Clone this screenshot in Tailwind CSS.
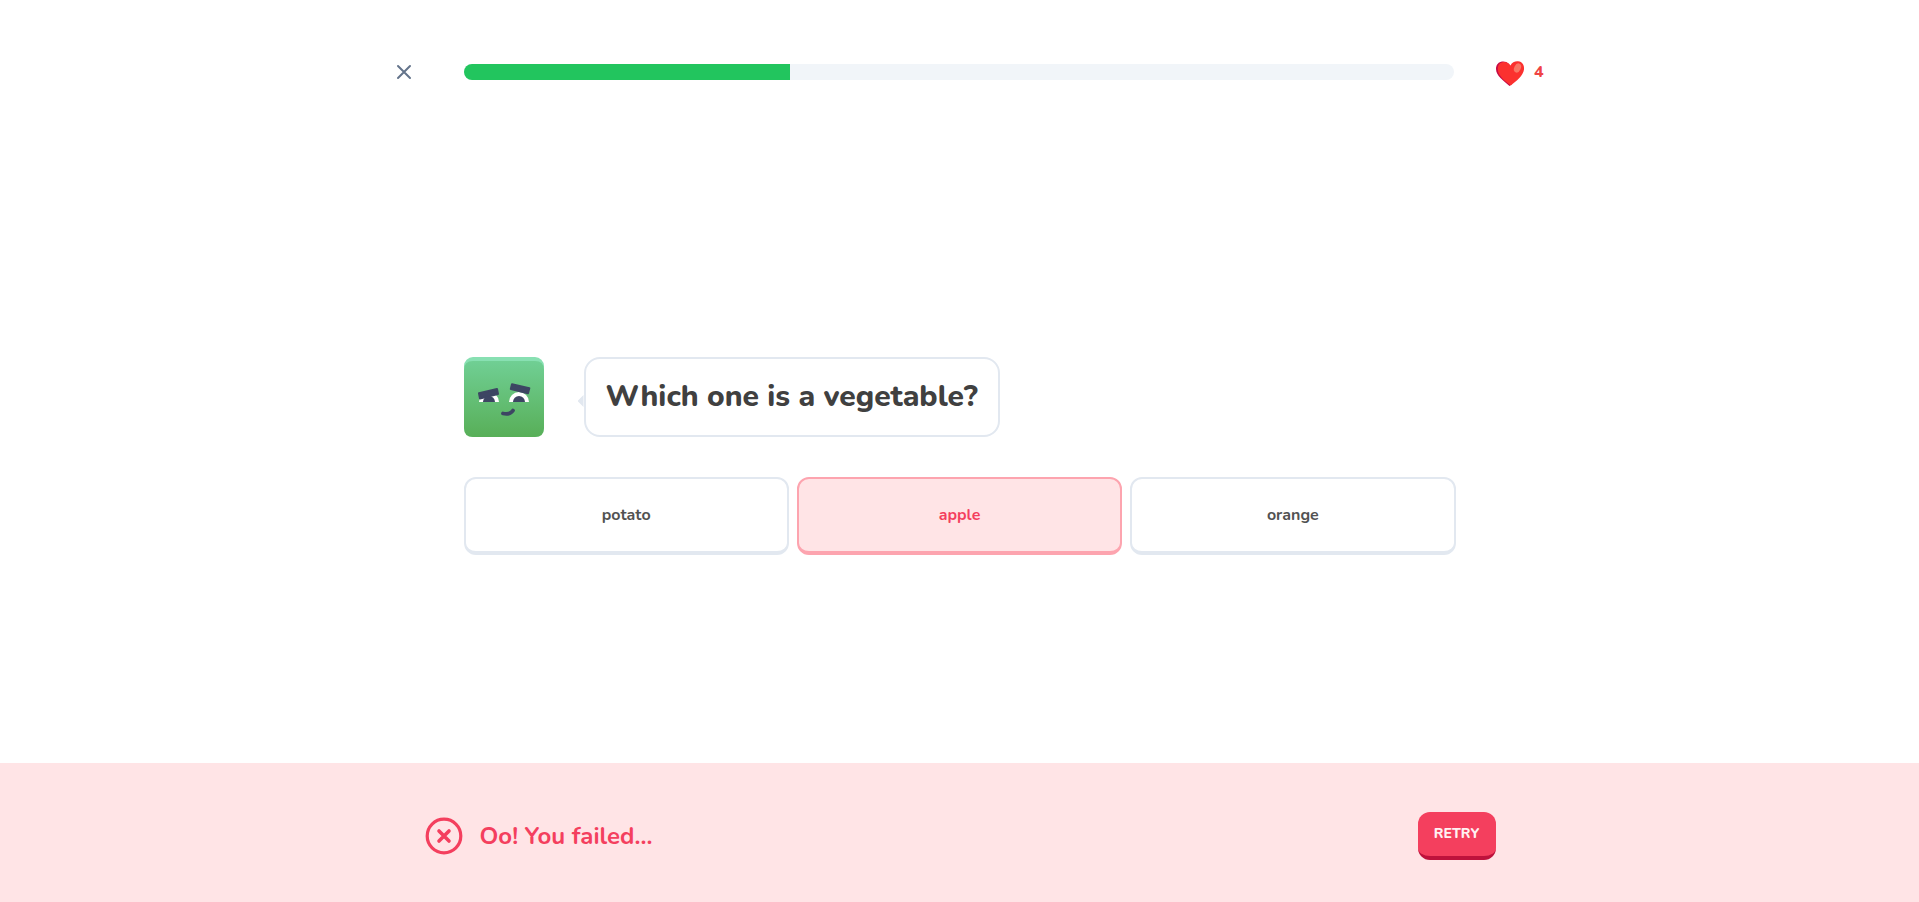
<!DOCTYPE html>
<html lang="en">
<head>
<meta charset="utf-8">
<meta name="viewport" content="width=device-width, initial-scale=1">
<title>Lesson</title>
<script src="https://cdn.jsdelivr.net/npm/@tailwindcss/browser@4"></script>
</head>
<body class="flex min-h-screen flex-col bg-white font-['Nunito','Lato',sans-serif]">
  <header class="mx-auto flex w-full max-w-[1168px] items-center gap-8 pt-12">
    <button type="button" aria-label="Close lesson" class="flex h-12 w-14 items-center justify-center text-[#64748b]">
      <svg class="size-6" viewBox="0 0 24 24" fill="none" stroke="currentColor" stroke-width="2" stroke-linecap="round" stroke-linejoin="round"><path d="M18 6 6 18M6 6l12 12"/></svg>
    </button>
    <div role="progressbar" aria-label="Lesson progress" aria-valuenow="33" aria-valuemin="0" aria-valuemax="100" class="h-4 flex-1 overflow-hidden rounded-full bg-[#f1f5f9]">
      <div class="h-full bg-[#22c55e]" style="width:33%"></div>
    </div>
    <div class="flex items-center gap-2 pl-2 font-extrabold text-[#ef4444]">
      <svg class="size-8" viewBox="0 0 32 32" aria-hidden="true">
        <path fill="#c70a45" d="M15 8C12.800 5.400 9.500 5 7 5.700 3.500 6.700 2 9.800 2 13c0 7 7.500 11.500 13.500 17l2-1.500z"/>
        <path fill="#fb312f" d="M16.500 9.500C18 6 21 5 24 5.200c4.500.4 6.500 4 6 8.300-.8 6.500-7.800 11.500-13.200 16C11 25 3.800 20 3.800 13 3.800 9 6 6.300 9.500 6c3-.2 5.500 1 7 3.500z"/>
        <ellipse cx="23.500" cy="12" rx="3.200" ry="4.800" transform="rotate(26 23.500 12)" fill="#f87765"/>
      </svg>
      <span>4</span>
    </div>
  </header>

  <main class="flex flex-1 items-center justify-center pt-[53px]">
    <div class="flex w-full max-w-[992px] flex-col gap-10">
      <div class="flex items-center gap-10">
        <svg class="size-20" viewBox="0 0 80 80" role="img" aria-label="Mascot">
          <defs>
            <linearGradient id="skin" x2="0" y2="1"><stop stop-color="#70cf94"/><stop offset="1" stop-color="#58af58"/></linearGradient>
          </defs>
          <rect width="80" height="80" rx="9" fill="#88e0b2"/>
          <path fill="url(#skin)" d="M0 13Q0 4 9 4H71Q80 4 80 13V71Q80 80 71 80H9Q0 80 0 71Z"/>
          <path fill="#fff" d="M15 45a10 10 0 0 1 20 0zM45 45a10 10 0 0 1 20 0z"/>
          <path fill="#3d4663" stroke="#3d4663" stroke-width="2" stroke-linejoin="round" d="m15 36.300 18-4.300 1 5-18 4.500zM48 27.200l17.300 4-1.300 5L46.800 32z"/>
          <path fill="#3d4663" d="M19 45a6 6 0 0 1 12 0zM49 45a6 6 0 0 1 12 0z"/>
          <path fill="none" stroke="#3d4663" stroke-width="3.800" stroke-linecap="round" d="M39 56.500Q46 58 49 53.500"/>
        </svg>
        <div class="relative flex h-20 items-center rounded-2xl border-2 border-[#e2e8f0] px-5">
          <div class="absolute top-1/2 -left-2 h-3 w-1.5 -translate-y-0.5 bg-[#e2e8f0] [clip-path:polygon(100%_0,0_50%,100%_100%)]"></div>
          <h1 class="text-3xl font-extrabold text-[#404040]">Which one is a vegetable?</h1>
        </div>
      </div>
      <div class="grid grid-cols-3 gap-2 text-base font-bold text-[#525252]">
        <button type="button" class="h-[78px] rounded-xl border-2 border-b-4 border-[#e2e8f0]">potato</button>
        <button type="button" aria-pressed="true" class="h-[78px] rounded-xl border-2 border-b-4 border-[#fda4af] bg-[#ffe4e6] text-[#f43f5e]">apple</button>
        <button type="button" class="h-[78px] rounded-xl border-2 border-b-4 border-[#e2e8f0]">orange</button>
      </div>
    </div>
  </main>

  <footer class="bg-[#ffe4e6] pt-[49px] pb-[42px]">
    <div class="mx-auto flex max-w-[1072px] items-center justify-between">
      <div class="flex items-center gap-4 text-2xl font-bold text-[#f43f5e]" role="status">
        <svg class="size-10" viewBox="0 0 40 40" fill="none" stroke="currentColor" stroke-linecap="round" aria-hidden="true">
          <circle cx="20" cy="20" r="16.800" stroke-width="3.200"/><path stroke-width="3.600" d="m15 15 10 10M25 15 15 25"/>
        </svg>
        <span>Oo! You failed...</span>
      </div>
      <button type="button" class="h-12 w-[78px] rounded-xl border-b-4 border-[#be123c] bg-[#f43f5e] text-sm font-extrabold text-[#fff1f2] uppercase">Retry</button>
    </div>
  </footer>
</body>
</html>
